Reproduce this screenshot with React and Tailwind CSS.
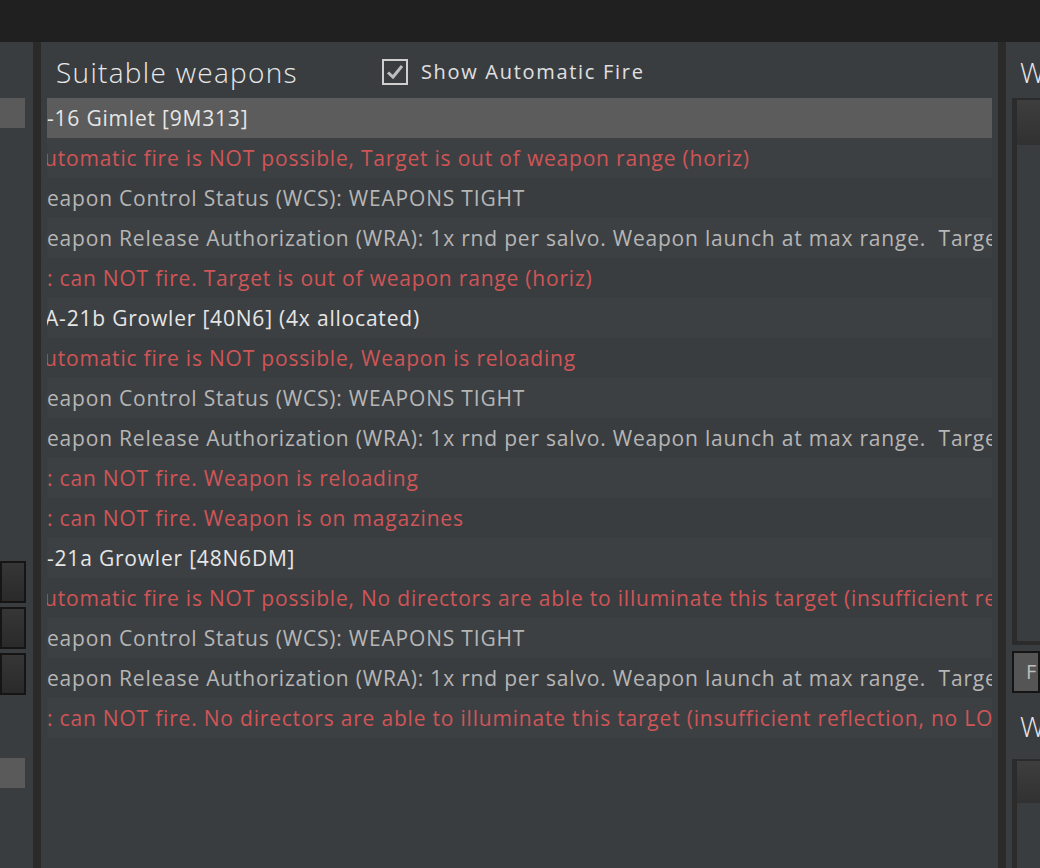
const rows = [
  { t: "-16 Gimlet [9M313]", c: "title", sel: true },
  { t: "utomatic fire is NOT possible, Target is out of weapon range (horiz)", c: "red", ml: -3 },
  { t: "eapon Control Status (WCS): WEAPONS TIGHT", c: "gray" },
  { t: "eapon Release Authorization (WRA): 1x rnd per salvo. Weapon launch at max range.  Target", c: "gray" },
  { t: ": can NOT fire. Target is out of weapon range (horiz)", c: "red" },
  { t: "A-21b Growler [40N6] (4x allocated)", c: "title", ml: -2 },
  { t: "utomatic fire is NOT possible, Weapon is reloading", c: "red", ml: -3 },
  { t: "eapon Control Status (WCS): WEAPONS TIGHT", c: "gray" },
  { t: "eapon Release Authorization (WRA): 1x rnd per salvo. Weapon launch at max range.  Target", c: "gray" },
  { t: ": can NOT fire. Weapon is reloading", c: "red" },
  { t: ": can NOT fire. Weapon is on magazines", c: "red" },
  { t: "-21a Growler [48N6DM]", c: "title" },
  { t: "utomatic fire is NOT possible, No directors are able to illuminate this target (insufficient reflection)", c: "red", ml: -3 },
  { t: "eapon Control Status (WCS): WEAPONS TIGHT", c: "gray" },
  { t: "eapon Release Authorization (WRA): 1x rnd per salvo. Weapon launch at max range.  Target", c: "gray" },
  { t: ": can NOT fire. No directors are able to illuminate this target (insufficient reflection, no LOS)", c: "red" },
];

const colors = {
  title: "text-[#e6e6e6]",
  red: "text-[#cf5557]",
  gray: "text-[#b6b6b6]",
};

function SideButton() {
  return (
    <div className="h-[42px] w-[26px] border-2 border-[#151515] bg-gradient-to-b from-[#363636] to-[#2a2a2a]" />
  );
}

export default function App() {
  return (
    <div
      className="w-[1040px] h-[868px] flex flex-col bg-[#202020] overflow-hidden"
      style={{ fontFamily: '"Open Sans", "Noto Sans", sans-serif' }}
    >
      <div className="h-[42px] shrink-0 bg-[#202020]" />
      <div className="flex flex-1 min-h-0">
        {/* left panel */}
        <div className="w-[33px] shrink-0 bg-[#3a3d40] flex flex-col">
          <div className="mt-[56px] h-[30px] w-[25px] bg-[#5a5a5a]" />
          <div className="mt-[433px] flex flex-col gap-[4px]">
            <SideButton />
            <SideButton />
            <SideButton />
          </div>
          <div className="mt-[63px] h-[30px] w-[25px] bg-[#5a5a5a]" />
        </div>
        <div className="w-[8px] shrink-0 bg-[#2a2a2a]" />

        {/* main panel */}
        <div className="flex-1 min-w-0 bg-[#3a3d40] flex flex-col">
          <div className="h-[56px] shrink-0 flex items-center pt-[3px]">
            <span className="ml-[15px] text-[28px] font-light text-[#e8e8e8] tracking-[1.3px]">
              Suitable weapons
            </span>
            <div className="ml-[84px] flex items-center">
              <div className="w-[26px] h-[26px] border-2 border-[#cfcfcf] flex items-center justify-center">
                <svg width="20" height="20" viewBox="0 0 20 20">
                  <path d="M3 10.5 L8 15 L17 4" fill="none" stroke="#bdbdbd" strokeWidth="3" />
                </svg>
              </div>
              <span className="ml-[13px] text-[20px] text-[#e0e0e0] tracking-[1.7px]">
                Show Automatic Fire
              </span>
            </div>
          </div>
          <div className="pl-[6px] pr-[6px] flex flex-col">
            {rows.map((r, i) => (
              <div
                key={i}
                className={
                  "h-[40px] overflow-hidden whitespace-pre flex items-center " +
                  (r.sel ? "bg-[#5c5c5c]" : i % 2 === 1 ? "bg-[#3d4043]" : "bg-[#3a3d40]")
                }
              >
                <span
                  className={"text-[21px] tracking-[0.8px] pt-[2px] " + colors[r.c]}
                  style={{ marginLeft: r.ml || 0 }}
                >
                  {r.t}
                </span>
              </div>
            ))}
          </div>
        </div>

        <div className="w-[8px] shrink-0 bg-[#2a2a2a]" />
        {/* right panel */}
        <div className="w-[34px] shrink-0 bg-[#3a3d40] flex flex-col overflow-hidden">
          <div className="h-[56px] shrink-0 flex items-center pl-[14px] pt-[3px] text-[28px] font-light text-[#e8e8e8]">
            W
          </div>
          <div className="ml-[6px] h-[547px] border-l-[5px] border-t-[2px] border-b-[4px] border-[#2b2b2b] bg-[#3a3d40] flex flex-col">
            <div className="h-[45px] bg-gradient-to-b from-[#3e3e3e] to-[#313131]" />
          </div>
          <div className="ml-[6px] mt-[6px] h-[42px] border-2 border-[#151515] bg-[#555555] flex items-center pl-[12px] text-[20px] text-[#bdbdbd]">
            F
          </div>
          <div className="h-[66px] shrink-0 flex items-center pl-[14px] text-[28px] font-light text-[#e8e8e8]">
            W
          </div>
          <div className="ml-[6px] flex-1 border-l-[5px] border-t-[2px] border-[#2b2b2b] flex flex-col">
            <div className="h-[42px] bg-gradient-to-b from-[#3e3e3e] to-[#313131]" />
          </div>
        </div>
      </div>
    </div>
  );
}
